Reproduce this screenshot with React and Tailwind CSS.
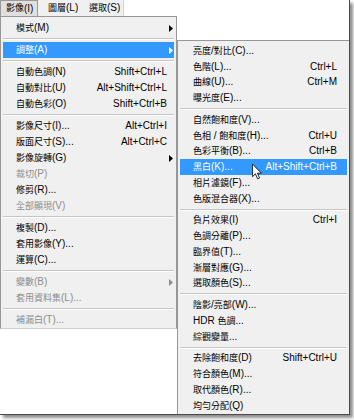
import React from "react";

const CJK = /([\u2E80-\u9FFF\uF900-\uFAFF\uFF00-\uFFEF]+)/;

function Txt({ s }) {
  const parts = s.split(CJK);
  return (
    <>
      {parts.map((p, i) =>
        i % 2 === 1 ? (
          <span key={i} className="text-[9px]">
            {p}
          </span>
        ) : (
          <span key={i}>{p}</span>
        )
      )}
    </>
  );
}

const SEP = { sep: true };

const MAIN = [
  { label: "模式(M)", arrow: true },
  SEP,
  { label: "調整(A)", arrow: true, active: true },
  SEP,
  { label: "自動色調(N)", sc: "Shift+Ctrl+L" },
  { label: "自動對比(U)", sc: "Alt+Shift+Ctrl+L" },
  { label: "自動色彩(O)", sc: "Shift+Ctrl+B" },
  SEP,
  { label: "影像尺寸(I)...", sc: "Alt+Ctrl+I" },
  { label: "版面尺寸(S)...", sc: "Alt+Ctrl+C" },
  { label: "影像旋轉(G)", arrow: true },
  { label: "裁切(P)", disabled: true },
  { label: "修剪(R)..." },
  { label: "全部顯現(V)", disabled: true },
  SEP,
  { label: "複製(D)..." },
  { label: "套用影像(Y)..." },
  { label: "運算(C)..." },
  SEP,
  { label: "變數(B)", arrow: true, disabled: true },
  { label: "套用資料集(L)...", disabled: true },
  SEP,
  { label: "補漏白(T)...", disabled: true },
];

const SUB = [
  { label: "亮度/對比(C)..." },
  { label: "色階(L)...", sc: "Ctrl+L" },
  { label: "曲線(U)...", sc: "Ctrl+M" },
  { label: "曝光度(E)..." },
  SEP,
  { label: "自然飽和度(V)..." },
  { label: "色相 / 飽和度(H)...", sc: "Ctrl+U" },
  { label: "色彩平衡(B)...", sc: "Ctrl+B" },
  { label: "黑白(K)...", sc: "Alt+Shift+Ctrl+B", active: true },
  { label: "相片濾鏡(F)..." },
  { label: "色版混合器(X)..." },
  SEP,
  { label: "負片效果(I)", sc: "Ctrl+I" },
  { label: "色調分離(P)..." },
  { label: "臨界值(T)..." },
  { label: "漸層對應(G)..." },
  { label: "選取顏色(S)..." },
  SEP,
  { label: "陰影/亮部(W)..." },
  { label: "HDR 色調..." },
  { label: "綜觀變量..." },
  SEP,
  { label: "去除飽和度(D)", sc: "Shift+Ctrl+U" },
  { label: "符合顏色(M)..." },
  { label: "取代顏色(R)..." },
  { label: "均勻分配(Q)" },
];

function Sep() {
  return (
    <div className="mx-[2px] h-[6px] pt-[2px]">
      <div className="h-px bg-[#c6c6c6]" />
      <div className="h-px bg-white" />
    </div>
  );
}

function Arrow({ color }) {
  return (
    <svg
      className="absolute right-[1px] top-[4.5px]"
      width="4"
      height="7"
      viewBox="0 0 4 7"
    >
      <path d="M0 0 L4 3.5 L0 7 Z" fill={color} />
    </svg>
  );
}

function Row({ item, sub }) {
  const color = item.active
    ? "bg-[#3399ff] text-white"
    : item.disabled
    ? "text-[#8d8d8d]"
    : "text-black";
  const arrowColor = item.active ? "#ffffff" : item.disabled ? "#8d8d8d" : "#000000";
  return (
    <div
      className={
        (sub ? "h-[15.75px] pr-[10px] " : "h-[16px] pr-[7px] ") +
        "relative mx-[2px] pl-[13px] flex items-center whitespace-nowrap " +
        color
      }
    >
      <div className="flex-1">
        <Txt s={item.label} />
      </div>
      {item.sc && <div>{item.sc}</div>}
      {item.arrow && <Arrow color={arrowColor} />}
    </div>
  );
}

function Cursor() {
  return (
    <svg
      className="absolute left-[252px] top-[163px]"
      width="10"
      height="17"
      viewBox="0 0 12 19"
    >
      <path
        d="M0.5 0.5 L0.5 15.8 L4.1 12.3 L6.7 18.3 L9 17.3 L6.5 11.5 L11.3 11.5 Z"
        fill="#ffffff"
        stroke="#000000"
        strokeWidth="1"
        strokeLinejoin="miter"
      />
    </svg>
  );
}

export default function App() {
  return (
    <div className="w-[354px] h-[420px] bg-white font-['Liberation_Sans','Noto_Sans_CJK_TC',sans-serif] text-[10px] leading-none text-black">
      <div className="relative w-[350px] h-[415px] bg-white border-r border-b border-[#4a4a4a] shadow-[3px_3px_3px_rgba(0,0,0,0.45)] overflow-hidden flex flex-col">
        {/* menu bar */}
        <div className="flex h-[16px] w-[124px] bg-[#f0f0f0] border-r border-[#d6d6d6]">
          <div className="w-[38px] h-[16px] pl-[5px] flex items-center bg-[#e0e0e0] border border-b-0 border-[#9a9a9a]">
            <Txt s="影像(I)" />
          </div>
          <div className="w-[41px] pl-[10px] flex items-center">
            <Txt s="圖層(L)" />
          </div>
          <div className="pl-[10px] flex items-center">
            <Txt s="選取(S)" />
          </div>
        </div>

        <div className="flex items-start">
          {/* main menu */}
          <div className="w-[177px] bg-[#f0f0f0] border border-[#979797] border-b-[#cfcfcf] pt-[3px]">
            {MAIN.map((it, i) =>
              it.sep ? <Sep key={i} /> : <Row key={i} item={it} />
            )}
          </div>
          {/* submenu */}
          <div className="w-[172px] mt-[24px] bg-[#f0f0f0] border-l border-t border-[#979797] pt-[2px] pb-[2px]">
            {SUB.map((it, i) =>
              it.sep ? <Sep key={i} /> : <Row key={i} item={it} sub />
            )}
          </div>
        </div>

        <Cursor />
      </div>
    </div>
  );
}
